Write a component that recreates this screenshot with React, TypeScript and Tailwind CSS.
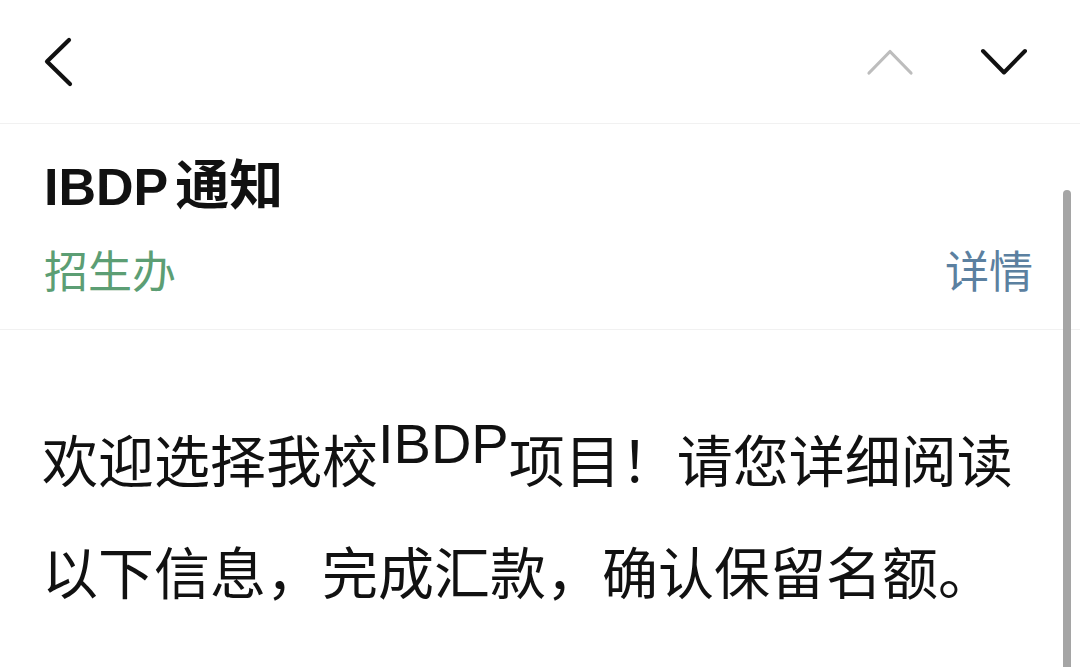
import React from 'react';

const font = { fontFamily: '"Liberation Sans", "Noto Sans CJK SC", sans-serif' };

const BackIcon = () => (
  <svg width="30" height="50" viewBox="0 0 30 50" fill="none">
    <path d="M26 3 L4 24.5 L27 47" stroke="#111" strokeWidth="4.2" strokeLinecap="round" strokeLinejoin="round" />
  </svg>
);

const UpIcon = () => (
  <svg width="48" height="28" viewBox="0 0 48 28" fill="none">
    <path d="M3 25 L24 3.5 L45 25" stroke="#bdbdbd" strokeWidth="3.2" strokeLinecap="round" strokeLinejoin="round" />
  </svg>
);

const DownIcon = () => (
  <svg width="48" height="28" viewBox="0 0 48 28" fill="none">
    <path d="M3 3 L24 24.5 L45 3" stroke="#111" strokeWidth="4" strokeLinecap="round" strokeLinejoin="round" />
  </svg>
);

export default function App() {
  return (
    <div className="relative h-[667px] w-[1080px] overflow-hidden bg-white" style={font}>
      {/* Top bar */}
      <div className="flex h-[124px] items-center justify-between border-b border-[#f1f1f1] pl-[43px] pr-[52px]">
        <BackIcon />
        <div className="flex items-center gap-[66px]">
          <UpIcon />
          <DownIcon />
        </div>
      </div>

      {/* Mail header */}
      <div className="border-b border-[#f1f1f1] pl-[44px] pr-[47px] pt-[30px] pb-[28px]">
        <h1 className="text-[52px] font-bold leading-[64px] text-[#111]">
          IBDP<span className="ml-[7px] text-[54px]">通知</span>
        </h1>
        <div className="mt-[26px] flex items-center justify-between text-[44px] leading-[56px]">
          <span className="text-[#5c9e74]">招生办</span>
          <span className="text-[#5b80a0]">详情</span>
        </div>
      </div>

      {/* Body */}
      <div className="pl-[42px] pr-[44px] pt-[77px]">
        <p className="text-[56px] leading-[112px] text-[#111]">
          欢迎选择我校<span className="align-[19px] leading-none">IBDP</span>项目！请您详细阅读以下信息，完成汇款，确认保留名额。
        </p>
      </div>

      {/* Scrollbar */}
      <div className="absolute right-[9px] top-[190px] bottom-0 w-[8px] rounded-t-full bg-[#a5a5a5]" />
    </div>
  );
}
